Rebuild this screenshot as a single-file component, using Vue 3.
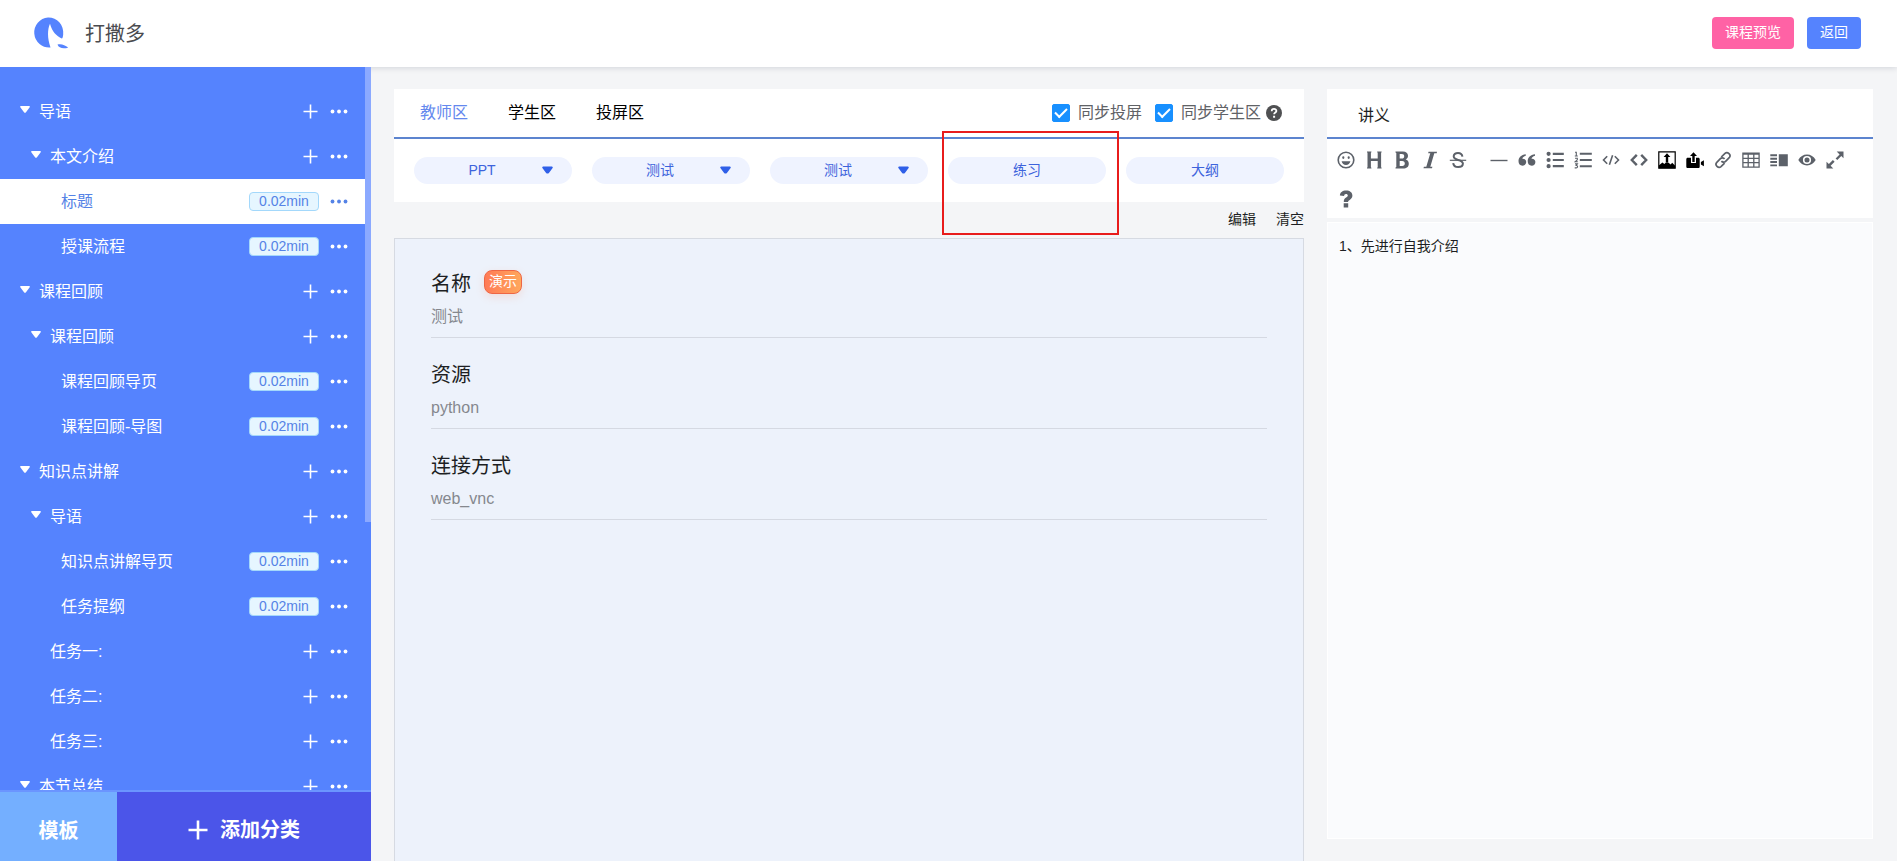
<script setup>
import { ref } from 'vue'

const nodes = [
  { name: '导语', level: 0, open: true },
  { name: '本文介绍', level: 1, open: true },
  { name: '标题', level: 2, time: '0.02min', active: true },
  { name: '授课流程', level: 2, time: '0.02min' },
  { name: '课程回顾', level: 0, open: true },
  { name: '课程回顾', level: 1, open: true },
  { name: '课程回顾导页', level: 2, time: '0.02min' },
  { name: '课程回顾-导图', level: 2, time: '0.02min' },
  { name: '知识点讲解', level: 0, open: true },
  { name: '导语', level: 1, open: true },
  { name: '知识点讲解导页', level: 2, time: '0.02min' },
  { name: '任务提纲', level: 2, time: '0.02min' },
  { name: '任务一:', level: 1 },
  { name: '任务二:', level: 1 },
  { name: '任务三:', level: 1 },
  { name: '本节总结', level: 0, open: true }
]

const tabs = ['教师区', '学生区', '投屏区']
const activeTab = ref('教师区')
const syncScreen = ref(true)
const syncStudent = ref(true)

const pills = [
  { label: 'PPT', menu: true },
  { label: '测试', menu: true },
  { label: '测试', menu: true },
  { label: '练习', marked: true },
  { label: '大纲' }
]

const fields = [
  { title: '名称', value: '测试', tag: '演示' },
  { title: '资源', value: 'python' },
  { title: '连接方式', value: 'web_vnc' }
]

const notes = ref('1、先进行自我介绍')

/* Toolbar glyphs on an 18 x 18 grid: f = filled, s = stroked */
const tools = [
  { id: 'emoji', s: 'M9 1.2a7.8 7.8 0 1 0 0 15.6a7.8 7.8 0 1 0 0-15.6z', w: 1.6, f: 'M5.2 6.6a1.1 1.3 0 1 0 2.2 0a1.1 1.3 0 1 0-2.2 0zM10.6 6.6a1.1 1.3 0 1 0 2.2 0a1.1 1.3 0 1 0-2.2 0zM4.6 10.2h8.8c-.5 2.4-2.200 3.700-4.400 3.700s-3.900-1.300-4.400-3.700z' },
  { id: 'heading', f: 'M2 .5h4.400v.8l-.5.5v5.800h6.800v-5.800l-.5-.5v-.8h4.400v.8l-.5.5v14.400l.5.500v.8h-4.400v-.8l.5-.5v-6.200h-6.800v6.200l.5.500v.8h-4.400v-.8l.5-.5v-14.400l-.5-.5z' },
  { id: 'bold', f: 'M2.500.5h7.400c3.200 0 5.100 1.600 5.100 4.300 0 1.700-.8 3-2.300 3.700 2 .6 3.100 2.100 3.100 4.200 0 3.100-2.100 4.800-5.700 4.800h-7.600v-1l.8-.4v-14.200l-.8-.4zM6.700 3v4.600h2.200c1.500 0 2.300-.8 2.300-2.300s-.8-2.300-2.300-2.300zM6.700 9.900v5.100h2.600c1.600 0 2.500-.9 2.500-2.500s-.9-2.600-2.600-2.600z' },
  { id: 'italic', f: 'M7.500.8h8.500l-.3 1.400h-2.400l-4 13.600h2.100l-.4 1.400h-8.500l.4-1.400h2.400l4-13.600h-2.100z' },
  { id: 'strike', s: 'M.8 9.300h16.400', w: 1.200, s2: 'M13.400 5.700c-.3-2.400-1.900-3.700-4.400-3.700-2.600 0-4.300 1.300-4.300 3.300 0 2.200 1.800 2.900 4.300 3.600s4.900 1.300 4.900 3.700c0 2.200-1.800 3.500-4.700 3.500-3 0-4.700-1.400-5-4', gap: true },
  { id: 'line', s: 'M.5 9.500h17', w: 1.400 },
  { id: 'quote', f: 'M7.800 3.200v1.500c-2 .6-3.200 1.600-3.500 3.100 2.100-.3 3.900 1 3.900 3.200 0 2.100-1.600 3.700-3.700 3.700-2.500 0-4-1.900-4-4.700 0-3.500 2.700-6.300 7.300-6.800zM17 3.200v1.500c-2 .6-3.200 1.600-3.500 3.100 2.100-.3 3.900 1 3.900 3.200 0 2.100-1.600 3.700-3.700 3.700-2.500 0-4-1.900-4-4.700 0-3.500 2.700-6.300 7.300-6.800z' },
  { id: 'bullets', f: 'M.5 2.800a2.100 2.100 0 1 0 4.200 0a2.100 2.100 0 1 0-4.200 0zM.5 9a2.100 2.100 0 1 0 4.200 0a2.100 2.100 0 1 0-4.200 0zM.5 15.200a2.100 2.100 0 1 0 4.200 0a2.100 2.100 0 1 0-4.200 0zM6.800 1.700h11v2.200h-11zM6.800 7.900h11v2.200h-11zM6.800 14.100h11v2.200h-11z' },
  { id: 'numbers', f: 'M5.800 1.700h12v2h-12zM5.800 8h12v2h-12zM5.800 14.300h12v2h-12z', s: 'M1 1.200h1.300v3.800M.8 5h3M1 7.200h2.300v1.600l-2.200 2h2.700M1 12.900h2.400l-1.200 1.600c2 0 1.700 2.500-.2 2.400h-1.300', w: 1.100 },
  { id: 'code', s: 'M5.200 5.200l-3.700 3.800 3.700 3.800M12.800 5.200l3.700 3.800-3.700 3.800M10.600 4.200l-3.200 9.600', w: 1.600 },
  { id: 'angle', s: 'M6.800 3.800l-5 5.200 5 5.200M11.200 3.800l5 5.200-5 5.200', w: 2.400 },
  { id: 'image', dark: true, s: 'M.8.8h16.400v16.400h-16.400z', w: 1.200, f: 'M.8 17.200v-2.600l3.600-3.200 2 1.700 1.200-1.300h3l2 1.700 1.600-1.800 3 3v2.500zM9 2.200l3.400 3.900h-2.200v5.500h-2.400v-5.500h-2.200z' },
  { id: 'video', dark: true, f: 'M1.800 6.700h3.200v5.300h5v-5.300h2.200c1 0 1.500.6 1.500 1.500v7.200c0 1-.5 1.500-1.500 1.500h-10.400c-1 0-1.500-.5-1.500-1.500v-7.200c0-.9.5-1.500 1.500-1.500zM7.500 1.200l3.500 3.800h-2.300v6h-2.400v-6h-2.300zM17.900 9.200v6l-3-1.700v-2.600z' },
  { id: 'link', s: 'M7.300 6l3.700-3.600c2.500-2.200 6.700 1.500 4.200 4.300l-3.600 3.700c-1.200 1.200-3.100 1-4.200-.3M10.600 12.100l-3.600 3.500c-2.600 2.200-6.700-1.600-4.200-4.300l3.600-3.700c1.200-1.200 3.100-1 4.200.3', w: 1.700 },
  { id: 'table', s: 'M.9 2.200h16.200v13.900h-16.200zM.9 3h16.200M.9 7.400h16.200M.9 11.700h16.200M6.200 3v13M11.800 3v13', w: 1.300 },
  { id: 'columns', f: 'M.3 3.300h6.700v2h-6.700zM.3 6.700h6.700v2h-6.700zM.3 10.100h6.700v2h-6.700zM.3 13.500h6.700v1.800h-6.700zM8.800 3.300h9v12h-9z' },
  { id: 'eye', f: 'M.3 9c2-3.500 5-5.400 8.700-5.400s6.700 1.900 8.700 5.400c-2 3.500-5 5.400-8.700 5.400s-6.700-1.900-8.700-5.400zM4.900 9a4.100 4.100 0 1 0 8.200 0a4.100 4.100 0 1 0-8.200 0zM6.500 9a2.500 2.500 0 1 0 5 0a2.500 2.500 0 1 0-5 0z' },
  { id: 'expand', f: 'M10.700.5h6.800v6.800l-2.200-2.200-4 4-1.700-1.700 4-4zM.5 10.700l2.400 2.400 4-4 1.700 1.700-4 4 2.700 2.700h-6.800z' },
  { id: 'help', f: 'M2.900 5.600c0-3 2.500-5 6.300-5 3.700 0 6.200 2 6.200 5 0 2.100-1.100 3.300-2.700 4.300-1.300.8-1.600 1.200-1.600 2.100h-4.300c0-2.500.6-3.400 2.300-4.400 1.300-.8 1.700-1.200 1.700-2 0-.9-.7-1.500-1.800-1.500-1.200 0-1.900.7-1.900 2zM6.700 13.300h4.500v4.200h-4.500z' }
]
</script>

<template>
  <div class="page">
    <header class="header">
      <svg class="logo" viewBox="0 0 36 32" aria-hidden="true">
        <path fill="#5583fe" d="M17.500 30.400A15 15 0 0 1 15 .5C23.500.2 31.200 7.300 30.200 17.500 29.900 20 29.500 21.400 28.800 21.400 23.500 19.300 19 14.500 17 6.800 14.400 12.300 14.200 21 17.500 30.400Z" />
        <path fill="#5583fe" d="M24.500 27.600c3.200-1.300 7.300.3 10.700 2.800-3.600 1.700-9.700 1.200-10.700-2.800z" />
      </svg>
      <h1 class="brand">打撒多</h1>
      <div class="head-actions">
        <button class="btn pink" type="button">课程预览</button>
        <button class="btn blue" type="button">返回</button>
      </div>
    </header>

    <div class="body">
      <aside class="sidebar">
        <div class="tree-wrap">
          <ul class="tree">
            <li v-for="(n, i) in nodes" :key="i" class="node" :class="['lv' + n.level, { active: n.active }]">
              <svg class="caret" viewBox="0 0 10 7" aria-hidden="true">
                <path v-if="n.open" fill="currentColor" d="M.8 0h8.400q1 .3.500 1.200l-3.900 5.200q-.8.800-1.600 0l-3.900-5.200q-.5-.9.500-1.200z" />
              </svg>
              <span class="name">{{ n.name }}</span>
              <span v-if="n.time" class="time">{{ n.time }}</span>
              <button v-else class="icon-btn" type="button" aria-label="添加">
                <svg width="15" height="15" viewBox="0 0 15 15"><path d="M7.500.5v14M.5 7.500h14" stroke="currentColor" stroke-width="1.600" /></svg>
              </button>
              <button class="icon-btn" type="button" aria-label="更多">
                <svg width="18" height="5" viewBox="0 0 18 5" fill="currentColor"><circle cx="2.500" cy="2.500" r="1.900" /><circle cx="9" cy="2.500" r="1.900" /><circle cx="15.500" cy="2.500" r="1.900" /></svg>
              </button>
            </li>
          </ul>
          <div class="scroll"></div>
        </div>
        <div class="side-foot">
          <button class="tpl" type="button">模板</button>
          <button class="add" type="button">
            <svg width="20" height="20" viewBox="0 0 20 20" aria-hidden="true"><path d="M10 .5v19M.5 10h19" stroke="#fff" stroke-width="2.600" /></svg>
            <span>添加分类</span>
          </button>
        </div>
      </aside>

      <main class="main">
        <section class="panel">
          <div class="tabs">
            <button v-for="t in tabs" :key="t" class="tab" :class="{ on: t === activeTab }" type="button" @click="activeTab = t">{{ t }}</button>
            <div class="sync">
              <label class="check"><input v-model="syncScreen" type="checkbox" />同步投屏</label>
              <label class="check"><input v-model="syncStudent" type="checkbox" />同步学生区</label>
              <svg class="info" viewBox="0 0 16 16" aria-hidden="true">
                <circle cx="8" cy="8" r="8" fill="#4f5052" />
                <path d="M5.700 6.300c0-3.200 4.700-3 4.700-.3 0 1.600-2.300 1.500-2.300 3.300" fill="none" stroke="#fff" stroke-width="1.800" />
                <path d="M7.100 10.700h2v2h-2z" fill="#fff" />
              </svg>
            </div>
          </div>
          <div class="pills">
            <div v-for="(p, i) in pills" :key="i" class="slot">
              <button class="pill" type="button">
                <span class="pill-label" :class="{ shift: p.menu }">{{ p.label }}</span>
                <svg v-if="p.menu" class="drop" viewBox="0 0 11 8" aria-hidden="true"><path fill="#2f5fe8" d="M1 .5h9q1.200.5.600 1.600l-3.700 4.900q-1.400 1.200-2.800 0l-3.700-4.900q-.6-1.100.6-1.600z" /></svg>
              </button>
              <span v-if="p.marked" class="mark"></span>
            </div>
          </div>
        </section>
        <div class="actions">
          <button type="button">编辑</button>
          <button type="button">清空</button>
        </div>
        <section class="detail">
          <div v-for="f in fields" :key="f.title" class="field">
            <h2>{{ f.title }}<span v-if="f.tag" class="tag">{{ f.tag }}</span></h2>
            <p>{{ f.value }}</p>
          </div>
        </section>
      </main>

      <section class="notes">
        <h2 class="notes-title"><label for="lecture">讲义</label></h2>
        <div class="toolbar">
          <button v-for="t in tools" :key="t.id" class="tool" :class="{ dark: t.dark, gap: t.gap }" type="button" :aria-label="t.id">
            <svg width="18" height="18" viewBox="0 0 18 18">
              <path v-if="t.f" :d="t.f" fill="currentColor" fill-rule="evenodd" />
              <path v-if="t.s" :d="t.s" fill="none" stroke="currentColor" :stroke-width="t.w" />
              <path v-if="t.s2" :d="t.s2" fill="none" stroke="currentColor" stroke-width="2" />
            </svg>
          </button>
        </div>
        <textarea id="lecture" v-model="notes" class="editor"></textarea>
      </section>
    </div>
  </div>
</template>

<style>
body {
  background: #f4f5f7;
}
</style>

<style scoped>
* {
  box-sizing: border-box;
}
.page {
  display: flex;
  flex-direction: column;
  height: 100vh;
  background: #f4f5f7;
  color: #1d1f23;
  font: 16px/24px "Liberation Sans", "Noto Sans CJK SC", sans-serif;
  overflow: hidden;
}
button,
textarea {
  font: inherit;
  color: inherit;
  border: 0;
  padding: 0;
  background: none;
}
button {
  cursor: pointer;
}
h1,
h2,
p,
ul {
  margin: 0;
  padding: 0;
  font-weight: 400;
}
svg {
  display: block;
}

.header {
  position: relative;
  z-index: 1;
  display: flex;
  align-items: center;
  flex: none;
  height: 67px;
  padding: 0 36px 0 33px;
  background: #fff;
  box-shadow: 0 1px 6px rgba(0, 21, 41, 0.14);
}
.logo {
  width: 36px;
  height: 32px;
  margin-bottom: 2px;
}
.brand {
  margin-left: 16px;
  margin-right: auto;
  font-size: 20px;
  line-height: 28px;
  color: #4a4b4f;
}
.head-actions {
  display: flex;
  gap: 13px;
  padding-bottom: 2px;
}
.btn {
  height: 32px;
  padding: 0 13px 2px;
  border-radius: 4px;
  font-size: 14px;
  color: #fff;
}
.pink {
  background: #ff62a5;
}
.blue {
  background: #5583fe;
}

.body {
  display: grid;
  grid-template-columns: 371px minmax(0, 5fr) minmax(0, 3fr);
  column-gap: 23px;
  flex: 1;
  min-height: 0;
  padding-right: 24px;
}

.sidebar {
  display: flex;
  flex-direction: column;
  min-height: 0;
  z-index: 2;
  background: #5583fe;
  color: #fff;
}
.tree-wrap {
  display: flex;
  flex: 1;
  min-height: 0;
  overflow: hidden;
  border-bottom: 2px solid #6b95ff;
}
.tree {
  flex: 1;
  padding-top: 22px;
  list-style: none;
}
.scroll {
  width: 6px;
  height: 455px;
  background: #8ba9ff;
}
.node {
  display: flex;
  align-items: center;
  height: 45px;
  padding: 0 17px 0 20px;
}
.lv1 {
  padding-left: 31px;
}
.lv2 {
  padding-left: 42px;
}
.active {
  background: #fff;
  color: #5583e6;
}
.caret {
  width: 10px;
  height: 7px;
  margin-bottom: 4px;
}
.name {
  flex: 1;
  margin-left: 9px;
}
.time {
  width: 70px;
  margin-right: 11px;
  border: 1px solid #a3d8fb;
  border-radius: 4px;
  background: #e6f6ff;
  color: #5583e6;
  font-size: 14px;
  line-height: 17px;
  text-align: center;
}
.icon-btn + .icon-btn {
  margin-left: 12px;
}
.side-foot {
  display: flex;
  flex: none;
  height: 69px;
  font-size: 20px;
  font-weight: 700;
}
.tpl {
  width: 117px;
  padding-top: 8px;
  background: #74afff;
}
.add {
  display: flex;
  flex: 1;
  align-items: center;
  justify-content: center;
  gap: 12px;
  padding-top: 6px;
  background: #4b55e9;
}

.main {
  display: flex;
  flex-direction: column;
  min-width: 0;
  min-height: 0;
  padding-top: 22px;
}
.panel {
  background: #fff;
}
.tabs {
  display: flex;
  align-items: center;
  gap: 40px;
  height: 50px;
  padding: 0 22px 0 26px;
  border-bottom: 2px solid #5c84cf;
  color: #000;
}
.tab.on {
  color: #6488ee;
}
.sync {
  display: flex;
  align-items: center;
  margin-left: auto;
  color: #606266;
}
.check {
  display: flex;
  align-items: center;
  gap: 8px;
  margin-right: 13px;
}
.check + .check {
  margin-right: 5px;
}
.check input {
  display: grid;
  place-items: center;
  appearance: none;
  width: 18px;
  height: 18px;
  margin: 0;
  border: 1px solid #1890ff;
  border-radius: 2px;
}
.check input:checked {
  background: #1890ff;
}
.check input:checked::after {
  content: "";
  width: 10px;
  height: 5px;
  margin-bottom: 4px;
  border: solid #fff;
  border-width: 0 0 2px 2px;
  transform: rotate(-45deg);
}
.info {
  width: 16px;
  height: 16px;
}
.pills {
  display: flex;
  gap: 20px;
  padding: 18px 20px;
}
.slot {
  position: relative;
  flex: 1;
}
.pill {
  display: flex;
  align-items: center;
  width: 100%;
  height: 27px;
  padding-bottom: 1px;
  border-radius: 14px;
  background: #eff3ff;
  color: #3d63dc;
  font-size: 14px;
}
.pill-label {
  flex: 1;
}
.shift {
  padding-left: 8px;
}
.drop {
  width: 11px;
  height: 8px;
  margin-right: 19px;
}
.mark {
  position: absolute;
  inset: -26px -13px -51px -6px;
  border: 2px solid #e81c1c;
  pointer-events: none;
}
.actions {
  display: flex;
  justify-content: flex-end;
  gap: 20px;
  height: 36px;
  padding-bottom: 2px;
  font-size: 14px;
}
.detail {
  flex: 1;
  padding: 8px 36px 0;
  border: 1px solid #d6dae2;
  border-bottom: 0;
  background: #edf2fb;
}
.field {
  padding: 23px 0 8px;
  border-bottom: 1px solid #d5d9e2;
}
.field h2 {
  display: flex;
  align-items: center;
  font-size: 20px;
  line-height: 28px;
}
.field p {
  margin-top: 7px;
  color: #85888e;
}
.tag {
  margin: 0 0 4px 13px;
  padding: 0 4px 2px;
  border: 1px solid #ee6644;
  border-radius: 8px;
  background: linear-gradient(90deg, #ff7a55, #ffa75c);
  box-shadow: 0 3px 8px rgba(255, 140, 90, 0.2);
  color: #fff;
  font-size: 14px;
  line-height: 20px;
}

.notes {
  display: flex;
  flex-direction: column;
  min-width: 0;
  padding: 22px 0;
}
.notes-title {
  height: 50px;
  padding-left: 31px;
  border-bottom: 2px solid #5c84cf;
  background: #fff;
  font-size: 16px;
  line-height: 54px;
}
.toolbar {
  display: flex;
  flex-wrap: wrap;
  padding: 1px 5px 0;
  background: #fff;
  color: #5c6169;
}
.tool {
  display: grid;
  place-items: center;
  width: 28px;
  height: 39px;
}
.tool.gap {
  margin-right: 13px;
}
.tool.dark {
  color: #000;
}
.editor {
  flex: 1;
  margin-top: 4px;
  padding: 11px;
  border: 1px solid #fff;
  background: #fafbfd;
  font-size: 14px;
  resize: none;
  outline: 0;
}
</style>
